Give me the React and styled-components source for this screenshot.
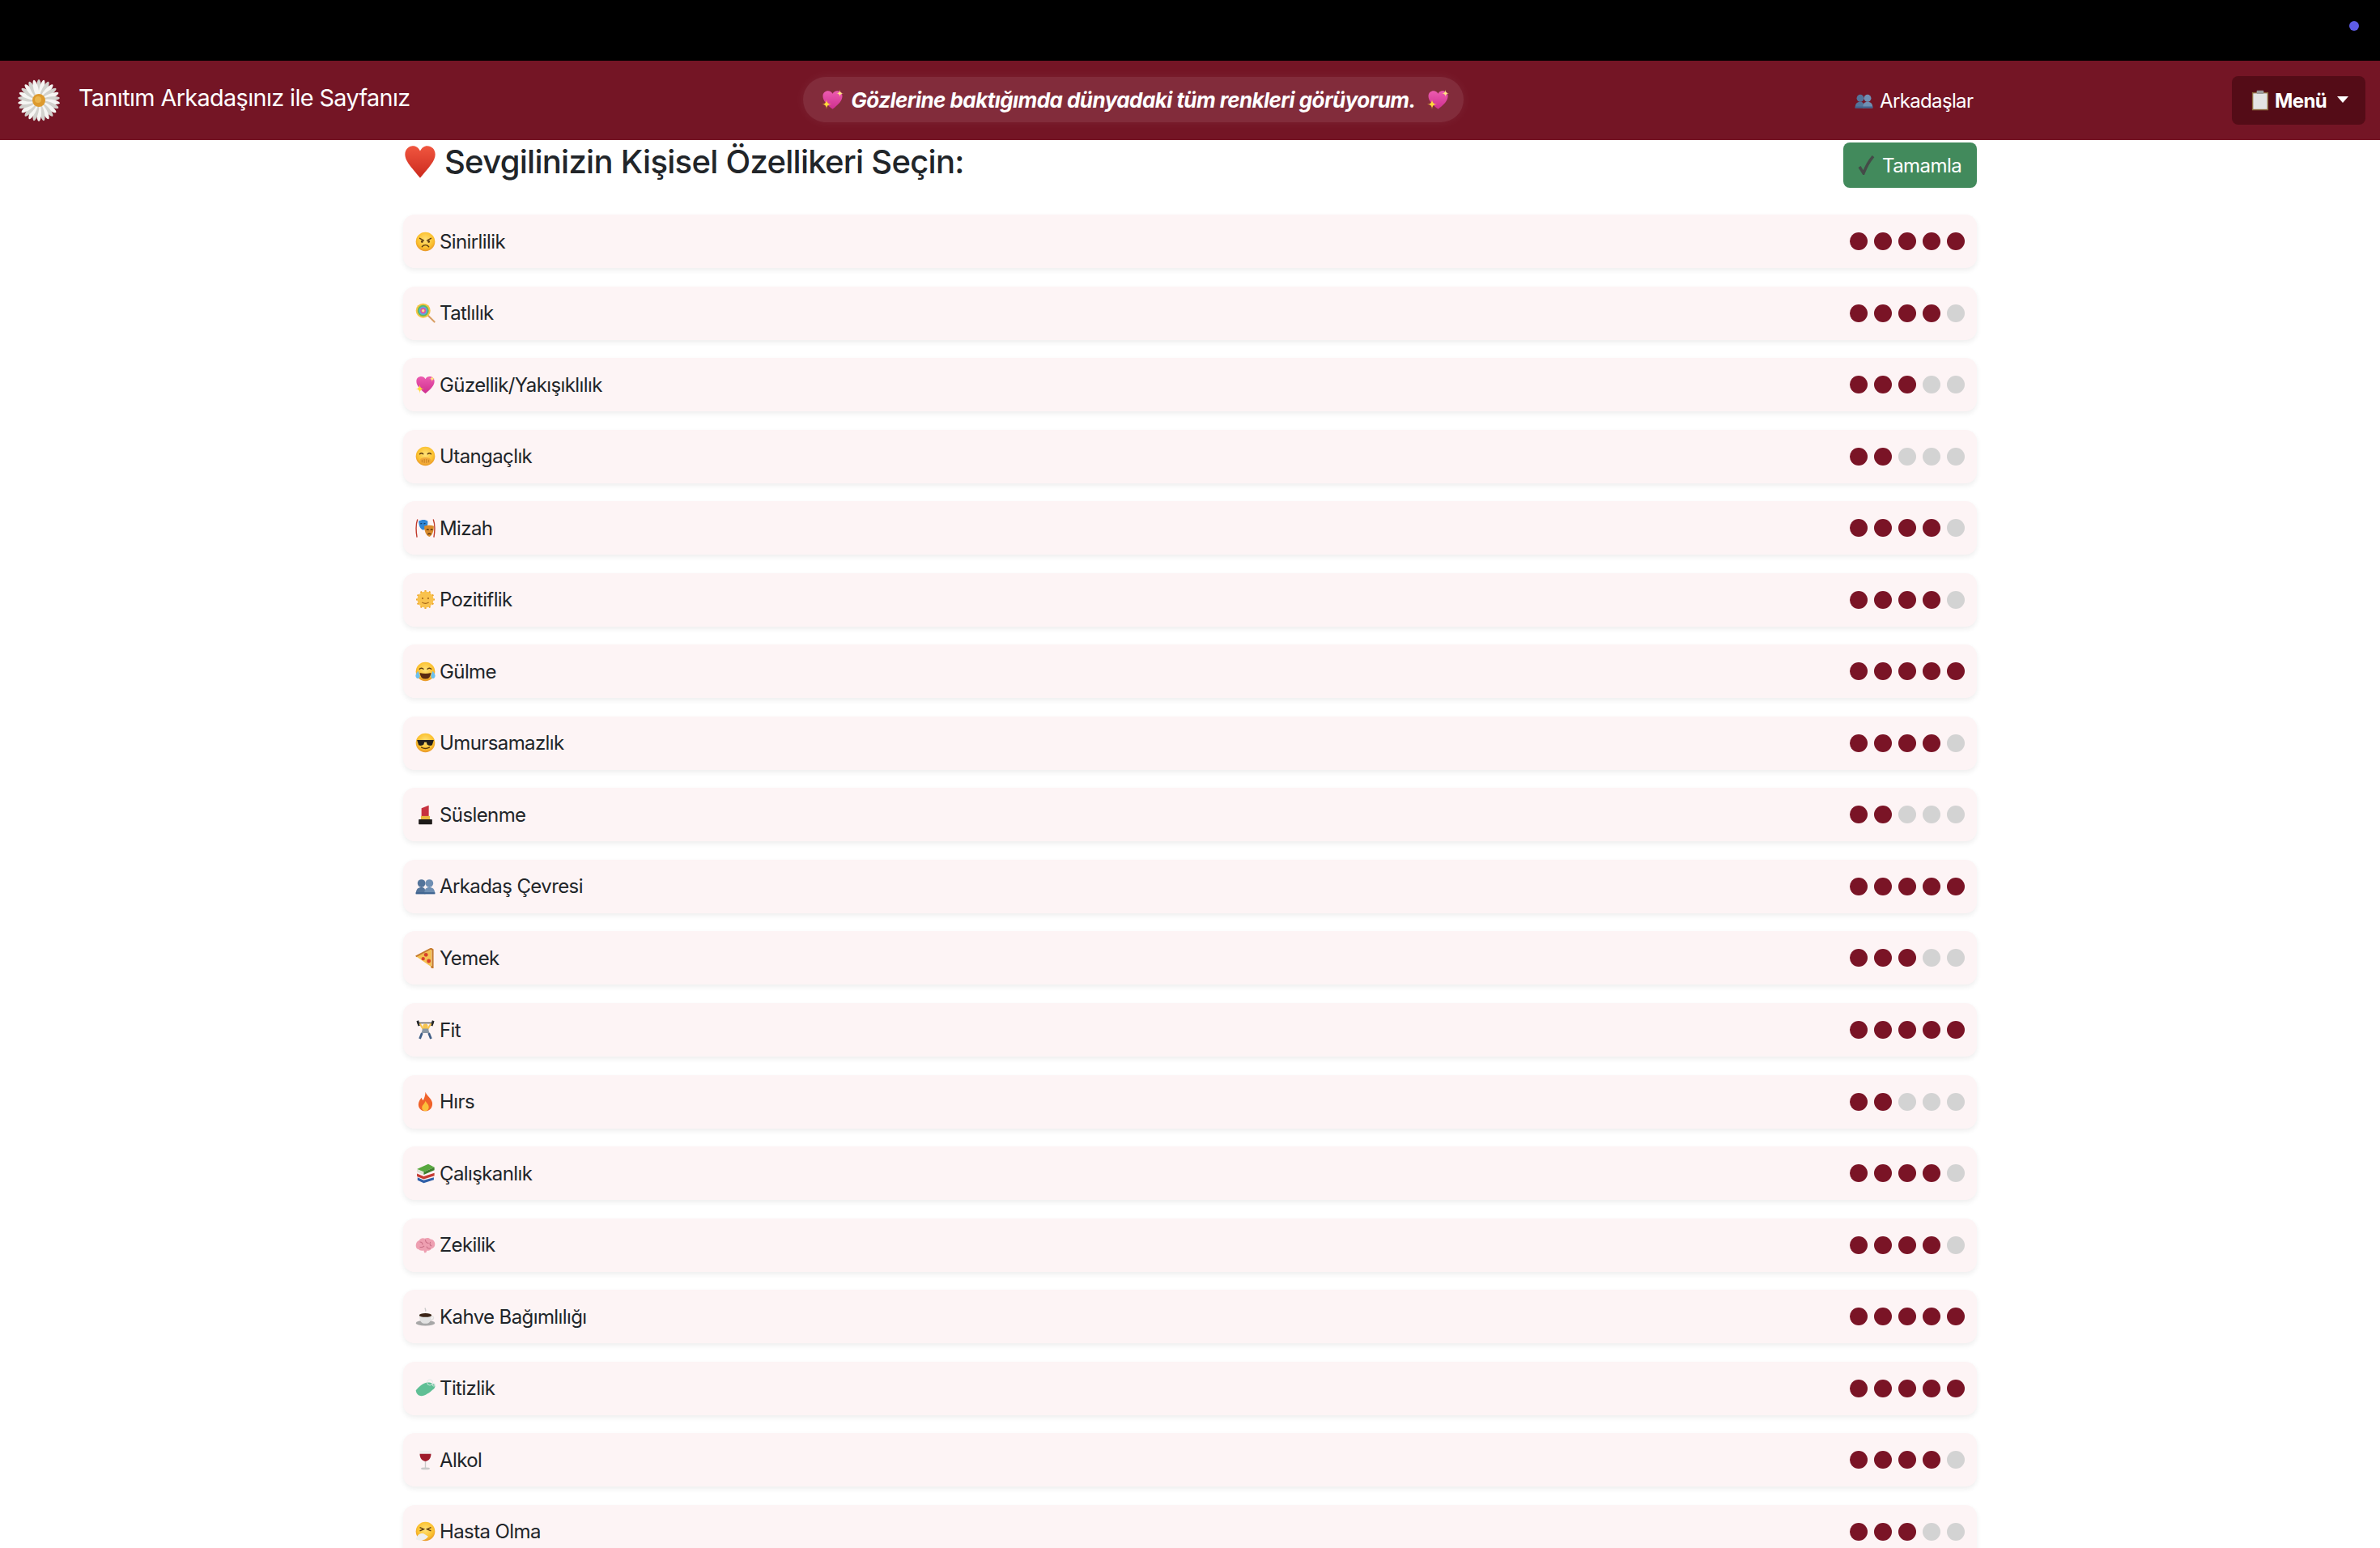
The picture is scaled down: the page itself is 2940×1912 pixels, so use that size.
import React, { useId } from 'react';
import styled, { createGlobalStyle } from 'styled-components';

const GlobalStyle = createGlobalStyle`
  * { box-sizing: border-box; }
  html, body { margin: 0; height: 1912px; overflow: hidden; background: #fff; }
  body {
    font-family: 'Inter', 'Noto Sans', sans-serif;
    color: #212529;
  }
`;

const TopStrip = styled.div`
  height: 75px;
  background: #000;
  display: flex;
  justify-content: flex-end;
  padding: 26px 26px 0 0;
`;

const StatusDot = styled.span`
  width: 12px;
  height: 12px;
  border-radius: 50%;
  background: #5e5ce6;
`;

const NavBar = styled.nav`
  height: 98px;
  background: #741525;
  display: flex;
  align-items: center;
  padding: 0 18px 0 22px;
  color: #fff;
`;

const Brand = styled.a`
  width: 970px;
  display: flex;
  align-items: center;
  gap: 23px;
`;

const BrandText = styled.span`
  font-size: 28.8px;
  letter-spacing: -0.62px;
  margin-bottom: 7px;
`;

const Quote = styled.div`
  width: 816px;
  height: 56px;
  margin-bottom: 2px;
  padding-left: 5px;
  border-radius: 28px;
  background: rgba(255, 255, 255, 0.1);
  box-shadow: 0 0 14px rgba(255, 255, 255, 0.06);
  display: flex;
  align-items: center;
  justify-content: center;
  gap: 9px;
  font-size: 26px;
  font-style: italic;
  font-weight: 700;
  letter-spacing: -0.56px;
  white-space: nowrap;
`;

const QuoteText = styled.span`
  margin-right: 5px;
`;

const FriendsLink = styled.a`
  margin-left: 483px;
  display: flex;
  align-items: center;
  gap: 8px;
  font-size: 24px;
  letter-spacing: -0.65px;
  flex: 1;
`;

const MenuButton = styled.button`
  width: 165px;
  height: 60px;
  border: 0;
  border-radius: 8px;
  background: #540c17;
  color: #fff;
  font: 700 24px 'Inter', sans-serif;
  letter-spacing: -0.6px;
  display: flex;
  align-items: center;
  padding: 0 0 0 22px;
  gap: 5px;
`;

const Caret = styled.span`
  margin-left: 8px;
  margin-bottom: 3px;
  border-left: 7px solid transparent;
  border-right: 7px solid transparent;
  border-top: 8px solid #fff;
`;

const Content = styled.main`
  width: 1944px;
  margin: 0 auto;
`;

const Header = styled.div`
  height: 92px;
  display: flex;
  justify-content: space-between;
  align-items: flex-start;
`;

const Heading = styled.h2`
  margin: 3px 0 0;
  display: flex;
  align-items: center;
  gap: 9px;
  font-size: 40px;
  font-weight: 550;
  letter-spacing: -0.72px;
  line-height: 48px;
`;

const DoneButton = styled.button`
  width: 165px;
  height: 56px;
  margin-top: 3px;
  border: 0;
  border-radius: 8px;
  background: #428a5c;
  color: #fff;
  font: 400 24px 'Inter', sans-serif;
  letter-spacing: -0.55px;
  display: flex;
  align-items: center;
  padding: 0 0 0 18px;
  gap: 6px;
`;

const TraitRow = styled.div`
  height: 66px;
  margin-bottom: 22.55px;
  padding: 0 15px;
  border-radius: 14px;
  background: #fdf4f5;
  box-shadow: 0 3px 6px rgba(0, 0, 0, 0.07);
  display: flex;
  align-items: center;
  justify-content: space-between;
`;

const TraitName = styled.span`
  display: flex;
  align-items: center;
  gap: 5px;
  font-size: 24px;
  letter-spacing: -0.6px;
`;

const Dots = styled.div`
  display: flex;
  gap: 8px;
`;

const Dot = styled.span`
  width: 22px;
  height: 22px;
  border-radius: 50%;
  background: ${p => (p.$on ? '#7a1426' : '#d3d3d3')};
`;

const Glyph = styled.svg`
  width: ${p => p.$size}px;
  height: ${p => p.$size}px;
  flex-shrink: 0;
`;

const Face = ({ children }) => {
  const id = useId();
  return (
    <>
      <defs>
        <radialGradient id={id} cx="50%" cy="40%" r="60%">
          <stop offset="0%" stopColor="#ffe27a" />
          <stop offset="70%" stopColor="#fbc02d" />
          <stop offset="100%" stopColor="#e8962a" />
        </radialGradient>
      </defs>
      <circle cx="18" cy="18" r="17" fill={`url(#${id})`} />
      {children}
    </>
  );
};

const heartPath = 'M18 33C8 25 2 19 2 11.5 2 6 6 3 10.5 3c3.2 0 6 1.6 7.5 4.6C19.500 4.600 22.300 3 25.500 3 30 3 34 6 34 11.500 34 19 28 25 18 33z';
const sparkle = (x, y, r) =>
  `M${x} ${y - r}Q${x} ${y} ${x + r} ${y}Q${x} ${y} ${x} ${y + r}Q${x} ${y} ${x - r} ${y}Q${x} ${y} ${x} ${y - r}z`;

const Busts = () => (
  <>
    <g fill="#54749a">
      <circle cx="11" cy="13" r="7" />
      <path d="M1 32c0-9 4-12 10-12s7 3 7 12z" />
    </g>
    <g fill="#6f8fb3">
      <circle cx="25" cy="13" r="7" />
      <path d="M16 32c0-9 3-12 9-12s10 3 10 12z" />
    </g>
    <rect x="1" y="29" width="34" height="3" fill="#3f6490" />
  </>
);

const SparkleHeart = () => {
  const id = useId();
  return (
    <>
      <defs>
        <linearGradient id={id} x1="0" y1="0" x2="0" y2="1">
          <stop offset="0%" stopColor="#ec5bb0" />
          <stop offset="100%" stopColor="#cf2f8f" />
        </linearGradient>
      </defs>
      <path d={heartPath} fill={`url(#${id})`} />
      <path d={sparkle(8, 25, 8)} fill="#ffd93b" />
      <path d={sparkle(30, 7, 6)} fill="#ffe680" />
    </>
  );
};

const RedHeart = () => {
  const id = useId();
  return (
    <>
      <defs>
        <linearGradient id={id} x1="0" y1="0" x2="0" y2="1">
          <stop offset="0%" stopColor="#f0563f" />
          <stop offset="100%" stopColor="#cc2a1e" />
        </linearGradient>
      </defs>
      <path d="M18 35C9 24 2 17 2 10 2 4.500 6 1 10.500 1c3.200 0 6 2 7.500 5.500C19.500 3 22.300 1 25.500 1 30 1 34 4.500 34 10c0 7-7 14-16 25z" fill={`url(#${id})`} />
    </>
  );
};

const icons = {
  angry: (
    <Face>
      <path d="M8 12l7 4M28 12l-7 4" stroke="#5b3a10" strokeWidth="2" strokeLinecap="round" />
      <circle cx="12" cy="18" r="2" fill="#5b3a10" />
      <circle cx="24" cy="18" r="2" fill="#5b3a10" />
      <path d="M12 27c3-4 9-4 12 0" stroke="#5b3a10" strokeWidth="2" fill="none" strokeLinecap="round" />
    </Face>
  ),
  lollipop: (
    <>
      <path d="M21 21l13 13" stroke="#d9a066" strokeWidth="3" strokeLinecap="round" />
      <circle cx="14" cy="14" r="13" fill="#f5c542" />
      <circle cx="14" cy="14" r="10" fill="#5fb85f" />
      <circle cx="14" cy="14" r="7.500" fill="#5aa9e6" />
      <circle cx="14" cy="14" r="5" fill="#e2559c" />
      <circle cx="14" cy="14" r="2.500" fill="#f7e08a" />
    </>
  ),
  sparkleHeart: <SparkleHeart />,
  shy: (
    <Face>
      <path d="M8 14q3-3 6 0M22 14q3-3 6 0" stroke="#5b3a10" strokeWidth="2" fill="none" strokeLinecap="round" />
      <ellipse cx="18" cy="26" rx="10" ry="6" fill="#f2a93b" />
      <path d="M12 24v5M16 23v7M20 23v7M24 24v5" stroke="#c77f1f" strokeWidth="1.500" />
    </Face>
  ),
  masks: (
    <>
      <path d="M3 34C1 22 1 10 4 2M33 34c2-12 2-24-1-32" stroke="#c0392b" strokeWidth="2" fill="none" />
      <path d="M6 5c6-3 12-3 16 0 1 8-2 15-8 16-5-1-8-8-8-16z" fill="#2f86d6" />
      <path d="M16 14c6-2 12-2 17 0 0 9-3 17-8 19-6-2-9-10-9-19z" fill="#d98a2b" />
      <path d="M20 21q2-2 4 0M27 21q2-2 4 0M22 29q3-3 6 0" stroke="#4a2a0c" strokeWidth="1.600" fill="none" />
      <path d="M9 10q2-1 3 0M15 10q2-1 3 0" stroke="#123d66" strokeWidth="1.600" fill="none" />
    </>
  ),
  sun: (
    <>
      <g stroke="#eda52c" strokeWidth="3">
        {[...Array(12)].map((_, i) => (
          <line key={i} x1="18" y1="1.500" x2="18" y2="6" transform={`rotate(${i * 30} 18 18)`} />
        ))}
      </g>
      <circle cx="18" cy="18" r="14.500" fill="#f9c24e" />
      <circle cx="13" cy="16" r="1.500" fill="#a8681a" />
      <circle cx="23" cy="16" r="1.500" fill="#a8681a" />
      <path d="M12 23q6 4 12 0" stroke="#a8681a" strokeWidth="1.500" fill="none" />
    </>
  ),
  joy: (
    <Face>
      <path d="M7 14q4-4 8 0M21 14q4-4 8 0" stroke="#5b3a10" strokeWidth="2" fill="none" />
      <path d="M8 20q10 3 20 0q-1 11-10 11T8 20z" fill="#5b2a10" />
      <path d="M5 17c-4 5-6 9-3 12s7 0 6-4zM31 17c4 5 6 9 3 12s-7 0-6-4z" fill="#6cc0ee" />
    </Face>
  ),
  cool: (
    <Face>
      <path d="M3 13h30l-1 3-2 6c-3 2-7 1-9-1l-1-4h-4l-1 4c-2 2-6 3-9 1l-2-6z" fill="#23201e" />
      <path d="M11 26q7 4 14 0" stroke="#5b3a10" strokeWidth="2" fill="none" strokeLinecap="round" />
    </Face>
  ),
  lipstick: (
    <>
      <path d="M11 20V6l13-5v19z" fill="#c7323f" />
      <rect x="10" y="20" width="16" height="6" fill="#e8b93f" />
      <rect x="6" y="26" width="24" height="9" rx="1" fill="#1d1a18" />
    </>
  ),
  busts: <Busts />,
  pizza: (
    <>
      <path d="M2 15L29 2v32z" fill="#f4c152" />
      <path d="M1 15L28 1l3 2v32l-3-2" fill="none" stroke="#c67a2d" strokeWidth="3" />
      <circle cx="19" cy="12" r="3.500" fill="#d8402b" />
      <circle cx="14" cy="19" r="3" fill="#d8402b" />
      <circle cx="24" cy="23" r="3.500" fill="#d8402b" />
    </>
  ),
  lifter: (
    <>
      <path d="M3 5l30 0" stroke="#555" strokeWidth="2" />
      <path d="M4 1l3 9M32 1l-3 9" stroke="#26292c" strokeWidth="4" />
      <circle cx="18" cy="11" r="4.500" fill="#f6c44f" />
      <path d="M8 6l6 10h8l6-10" stroke="#f6c44f" strokeWidth="3" fill="none" />
      <path d="M13 15h10l2 8H11z" fill="#8b98a5" />
      <path d="M12 23l-4 10M24 23l4 10" stroke="#3f5d86" strokeWidth="4" />
    </>
  ),
  fire: (
    <>
      <path d="M18 1c2 6 10 11 12 18 2 9-4 16-12 16S4 29 6 20c1-4 3-6 5-9 1 3 2 4 3 5 2-4 4-9 4-15z" fill="#f0622a" />
      <path d="M18 17c1 3 6 6 6 11 0 4-3 7-6 7s-7-3-6-7c0-3 5-6 6-11z" fill="#fbbf3a" />
    </>
  ),
  books: (
    <>
      <path d="M3 10l20-9 11 6-19 8z" fill="#58a83f" />
      <path d="M3 10v5l12 5V15z" fill="#dfe3d5" />
      <path d="M15 15l19-8v5l-19 8z" fill="#3d7f2c" />
      <path d="M3 18l12 5 19-6v5l-19 6-12-5z" fill="#c53a32" />
      <path d="M4 25l11 5 18-5v4l-18 6-11-5z" fill="#2f5fa8" />
    </>
  ),
  brain: (
    <>
      <path d="M1 19c0-5 3-8 6-9 2-4 7-5 10-3 3-2 8-2 10 1 4 0 8 4 8 9 0 4-2 7-6 8-2 3-5 4-8 3l-2 4h-3l-1-4c-4 1-8 0-9-2-3 0-5-3-5-7z" fill="#ee9fb1" />
      <path d="M8 13c3 0 5 2 5 5M18 9c0 4 3 6 6 6M27 13c-2 3-1 6 2 7M8 22c3 1 6 0 8-2M20 21c1 3 4 4 7 3" stroke="#c96f87" strokeWidth="1.500" fill="none" />
    </>
  ),
  coffee: (
    <>
      <path d="M18 2c-2 2 2 3 0 6" stroke="#c9c9c9" strokeWidth="2" fill="none" />
      <ellipse cx="18" cy="29" rx="17" ry="5" fill="#a7a7a7" />
      <path d="M7 15h22c0 9-3 15-11 15S7 24 7 15z" fill="#e2e2e2" />
      <ellipse cx="18" cy="15" rx="11" ry="3.500" fill="#3b2417" />
      <path d="M29 17c5 0 5 6-2 7" stroke="#e2e2e2" strokeWidth="2" fill="none" />
    </>
  ),
  soap: (
    <>
      <path d="M1 22c5-6 13-13 20-14 5-1 12 2 14 5 1 3-1 6-4 8-5 5-14 11-20 11-5 0-9-3-10-10z" fill="#5fbf95" />
      <circle cx="26" cy="8" r="5" fill="none" stroke="#dde9e4" strokeWidth="1.300" />
      <circle cx="33" cy="12" r="2.500" fill="none" stroke="#dde9e4" strokeWidth="1.300" />
    </>
  ),
  wine: (
    <>
      <path d="M8 1h20c1 10-1 18-10 19C9 19 7 11 8 1z" fill="#f1eeee" />
      <path d="M8 7h20c0 7-3 12-10 13C11 19 8 14 8 7z" fill="#9e1b2a" />
      <rect x="17" y="20" width="2" height="12" fill="#c9c9c9" />
      <ellipse cx="18" cy="33" rx="8" ry="2" fill="#c9c9c9" />
    </>
  ),
  sneeze: (
    <Face>
      <path d="M8 11l7 3-7 3M28 11l-7 3 7 3" stroke="#5b3a10" strokeWidth="2" fill="none" />
      <path d="M1 32c2-8 8-12 14-10l8 5c-4 7-15 9-22 5z" fill="#eee" />
    </Face>
  ),
  heart: <RedHeart />,
  clipboard: (
    <>
      <rect x="4" y="4" width="28" height="31" fill="#8c6a3f" />
      <rect x="6" y="6" width="24" height="27" fill="#e4e4e4" />
      <rect x="12" y="1" width="12" height="6" rx="1" fill="#9a9a9a" />
    </>
  ),
};

const Emoji = ({ name, size = 25 }) => (
  <Glyph $size={size} viewBox="0 0 36 36">
    {icons[name]}
  </Glyph>
);

const Daisy = () => (
  <Glyph $size={52} viewBox="0 0 52 52">
    {[...Array(26)].map((_, i) => (
      <ellipse
        key={i}
        cx="26"
        cy="11"
        rx="3"
        ry="11"
        fill={i % 2 ? '#f6f6f4' : '#d2d2ce'}
        transform={`rotate(${i * (360 / 26)} 26 26)`}
      />
    ))}
    <circle cx="26" cy="26" r="8" fill="#dd9a2e" />
    <circle cx="25" cy="25" r="4" fill="#eab54e" />
  </Glyph>
);

const CheckMark = () => (
  <Glyph $size={24} viewBox="0 0 24 24">
    <path d="M2 14l5 8c3-8 6-14 12-21" fill="none" stroke="#444b48" strokeWidth="3.500" />
  </Glyph>
);

const traits = [
  ['angry', 'Sinirlilik', 5],
  ['lollipop', 'Tatlılık', 4],
  ['sparkleHeart', 'Güzellik/Yakışıklılık', 3],
  ['shy', 'Utangaçlık', 2],
  ['masks', 'Mizah', 4],
  ['sun', 'Pozitiflik', 4],
  ['joy', 'Gülme', 5],
  ['cool', 'Umursamazlık', 4],
  ['lipstick', 'Süslenme', 2],
  ['busts', 'Arkadaş Çevresi', 5],
  ['pizza', 'Yemek', 3],
  ['lifter', 'Fit', 5],
  ['fire', 'Hırs', 2],
  ['books', 'Çalışkanlık', 4],
  ['brain', 'Zekilik', 4],
  ['coffee', 'Kahve Bağımlılığı', 5],
  ['soap', 'Titizlik', 5],
  ['wine', 'Alkol', 4],
  ['sneeze', 'Hasta Olma', 3],
];

const App = () => (
  <>
    <GlobalStyle />
    <TopStrip>
      <StatusDot />
    </TopStrip>
    <NavBar>
      <Brand>
        <Daisy />
        <BrandText>Tanıtım Arkadaşınız ile Sayfanız</BrandText>
      </Brand>
      <Quote>
        <Emoji name="sparkleHeart" size={27} />
        <QuoteText>Gözlerine baktığımda dünyadaki tüm renkleri görüyorum.</QuoteText>
        <Emoji name="sparkleHeart" size={27} />
      </Quote>
      <FriendsLink>
        <Emoji name="busts" size={23} />
        Arkadaşlar
      </FriendsLink>
      <MenuButton>
        <Emoji name="clipboard" size={26} />
        Menü
        <Caret />
      </MenuButton>
    </NavBar>
    <Content>
      <Header>
        <Heading>
          <Emoji name="heart" size={42} />
          Sevgilinizin Kişisel Özellikeri Seçin:
        </Heading>
        <DoneButton>
          <CheckMark />
          Tamamla
        </DoneButton>
      </Header>
      {traits.map(([icon, label, score]) => (
        <TraitRow key={label}>
          <TraitName>
            <Emoji name={icon} />
            {label}
          </TraitName>
          <Dots>
            {[1, 2, 3, 4, 5].map(n => (
              <Dot key={n} $on={n <= score} />
            ))}
          </Dots>
        </TraitRow>
      ))}
    </Content>
  </>
);

export default App;
